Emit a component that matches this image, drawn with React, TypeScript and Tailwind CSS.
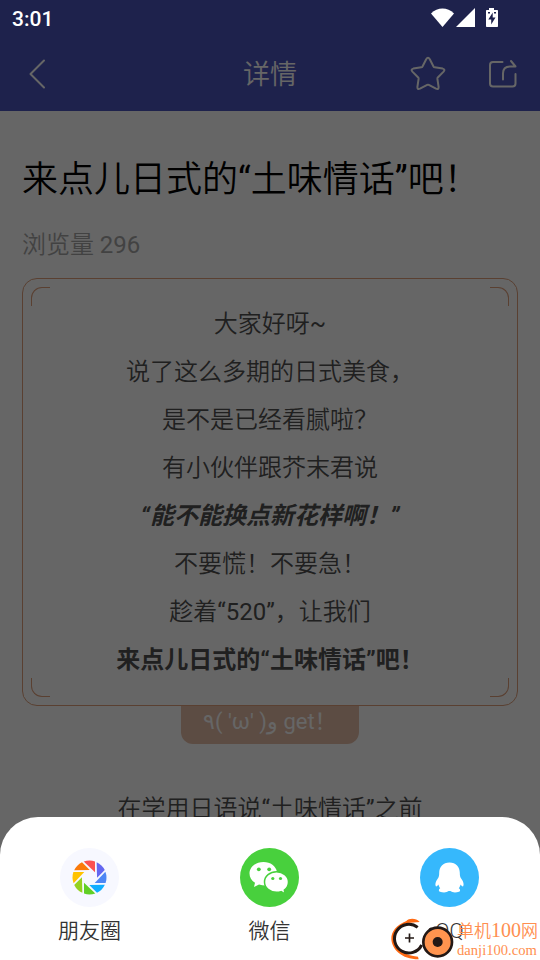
import type { ReactNode } from "react";

const lines = [
  { text: "大家好呀~" },
  { text: "说了这么多期的日式美食，" },
  { text: "是不是已经看腻啦？" },
  { text: "有小伙伴跟芥末君说" },
  { text: "“能不能换点新花样啊！”", className: "font-bold italic" },
  { text: "不要慌！不要急！" },
  { text: "趁着“520”，让我们" },
  { text: "来点儿日式的“土味情话”吧！", className: "font-bold" },
];

// Chinese runs are set in the demi-light cut, Latin runs and quotes stay regular
function Mixed({ text }: { text: string }) {
  return text.split(/([“”~0-9]+)/).map((part, i) =>
    i % 2 ? (
      <span key={i} className="font-normal">
        {part}
      </span>
    ) : (
      part
    ),
  );
}

function StatusBar() {
  return (
    <div className="absolute inset-x-0 top-0 z-20 flex h-9 items-center justify-between pl-3 pr-[41px] text-white">
      <span className="pt-px text-[21px] font-medium leading-9">3:01</span>
      <svg width="68" height="20" viewBox="0 0 68 20" fill="currentColor">
        <path d="M0 5.5C6.5-1.2 16.5-1.2 23 5.5L11.5 19z" />
        <path d="M44 0v19H25z" />
        <path d="M58 0h5v2h3.200q.8 0 .8.8v15.400q0 .8-.8.8H55.800q-.8 0-.8-.8V2.800q0-.8.8-.8H58z" />
        <path d="M61.700 4.500v5h2.800l-4.300 7v-5h-2.900zM57 4h2v1.500h-2zM63 4h2v1.500h-2z" fill="#1e224c" />
      </svg>
    </div>
  );
}

function Header() {
  return (
    <header className="grid h-[111px] grid-cols-3 items-center bg-[#4b55be] px-[22px] pt-9 text-white">
      <svg width="30" height="30" viewBox="0 0 30 30" fill="none" stroke="currentColor" strokeWidth="2" strokeLinecap="round" strokeLinejoin="round">
        <path d="M22 1.500 8.500 15 22 28.500" />
      </svg>
      <h1 className="pt-1 text-center text-[27px]">详情</h1>
      <div className="flex items-center justify-end gap-[42px]">
        <svg width="36" height="36" viewBox="0 0 36 36" fill="none" stroke="currentColor" strokeWidth="2" strokeLinejoin="round">
          <path d="M16.200 3.200q1.800-2.900 3.600 0l3.700 7.300q.4.700 1.200.8l8 1.300q2.900.7.900 3l-5.800 5.900q-.5.600-.4 1.400l1.200 8q.2 3-2.600 1.800l-7.200-3.800q-.8-.4-1.600 0l-7.200 3.800q-2.800 1.200-2.600-1.800l1.200-8q.1-.8-.4-1.400l-5.800-5.900q-2-2.300.9-3l8-1.300q.8-.1 1.200-.8z" />
        </svg>
        <svg width="30" height="30" viewBox="0 0 30 30" fill="none" stroke="currentColor" strokeWidth="2" strokeLinecap="round" strokeLinejoin="round">
          <path d="M14.500 3H5Q2 3 2 6v18.500q0 3 3 3h19.500q3 0 3-3V15" />
          <path d="M15 20.500v-6q0-7 7-7h5.500L23 2" />
        </svg>
      </div>
    </header>
  );
}

function QuoteCard() {
  return (
    <section className="relative h-[428px] rounded-[15px] border border-[#e0a07c] pt-[21px] text-center text-2xl leading-[48px] text-[#505050]">
      <i className="absolute left-2 top-2 size-[19px] rounded-tl-[11px] border-l border-t border-[#e0a07c]" />
      <i className="absolute right-2 top-2 size-[19px] rounded-tr-[11px] border-r border-t border-[#e0a07c]" />
      <i className="absolute bottom-2 left-2 size-[19px] rounded-bl-[11px] border-b border-l border-[#e0a07c]" />
      <i className="absolute bottom-2 right-2 size-[19px] rounded-br-[11px] border-b border-r border-[#e0a07c]" />
      {lines.map((line) => (
        <p key={line.text} className={line.className}>
          {line.className ? line.text : <Mixed text={line.text} />}
        </p>
      ))}
    </section>
  );
}

function ShareItem({ label, children }: { label: string; children: ReactNode }) {
  return (
    <button type="button" className="flex flex-1 flex-col items-center gap-2 pr-px text-[21px] leading-[33px] text-[#333]">
      {children}
      <span>{label}</span>
    </button>
  );
}

const blades = ["#fa5151", "#6467f0", "#4d86f5", "#10aeff", "#61cf25", "#95d11f", "#ffc300", "#fa7a0a"];

function MomentsIcon() {
  return (
    <svg width="59" height="59" viewBox="-29.5 -29.5 59 59">
      <circle r="29.500" fill="#f7f8ff" />
      {blades.map((color, i) => (
        <path
          key={color}
          d="M-5.800-15.900A17 17 0 0 1 5.500-16.100V-5.200z"
          fill={color}
          transform={`rotate(${i * 45})`}
        />
      ))}
    </svg>
  );
}

function WechatIcon() {
  return (
    <svg width="59" height="59" viewBox="0.5 0.5 59 59">
      <circle cx="30" cy="30" r="29.500" fill="#48d03d" />
      <path d="M24 14.500c-8 0-14 5-14 11.500 0 4 2 7 5.500 9.200L14.500 39.500l5-2.500q6 1.600 11 .3l7-12.800C36.500 18.500 31 14.500 24 14.500z" fill="#fff" />
      <path d="M37 24.200c-6.500 0-12 4.500-12 10.300s5.500 10.300 12 10.300q2.500 0 4.600-.7l4 2.200-.8-3.700c2.800-2 4.200-4.700 4.200-8.100 0-5.800-5.500-10.300-12-10.300z" fill="#fff" stroke="#48d03d" strokeWidth="1.500" />
      <g fill="#48d03d">
        <circle cx="19.300" cy="21.800" r="1.900" />
        <circle cx="29.700" cy="21.800" r="1.900" />
        <circle cx="33.300" cy="31" r="1.600" />
        <circle cx="41" cy="31" r="1.600" />
      </g>
    </svg>
  );
}

function QQIcon() {
  return (
    <svg width="59" height="59" viewBox="0.5 0.5 59 59">
      <circle cx="30" cy="30" r="29.500" fill="#36b8fc" />
      <path d="M30 15c-6.500 0-10.300 4.600-10.300 10.300 0 3-.3 4.500-1.700 6.200-2 2.700-2.600 5.700-1.700 7.300.7.600 1.800-.6 2.600-1.700.4 1.600 1 2.700 1.800 3.600-1.700.8-1.800 3-.2 3.600 3 .9 6.800.9 8.600-.7h1.800c1.800 1.600 5.600 1.600 8.600.7 1.600-.6 1.500-2.800-.2-3.600.8-.9 1.400-2 1.800-3.600.8 1.100 1.900 2.300 2.600 1.700.9-1.600.3-4.600-1.700-7.300-1.400-1.700-1.700-3.200-1.700-6.200C40.300 19.600 36.500 15 30 15z" fill="#fff" />
    </svg>
  );
}

function Watermark() {
  return (
    <div className="absolute bottom-0 right-0 flex h-12 text-[#ff8f50]">
      <svg width="70" height="48" viewBox="0 0 210 144" fill="none">
        <path d="M98 30C88 18 66 18 58 27C28 40 12 58 13 82c2 30 30 60 82 60l-2-8C55 130 24 112 23 80c-1-20 12-40 38-47z" fill="#ff6a13" />
        <path d="M92 46A43 43 0 1 0 104 99" stroke="#231815" strokeWidth="9" />
        <path d="M54 78h27M67.500 64.500v27" stroke="#231815" strokeWidth="5" />
        <path d="m129 48 12 20" stroke="#231815" strokeWidth="8" />
        <circle cx="152" cy="90" r="43" fill="#ff944f" stroke="#231815" strokeWidth="8" />
        <circle cx="152" cy="90" r="15" fill="#231815" />
      </svg>
      <div className="w-[83px] whitespace-nowrap pt-2 font-['Liberation_Serif','Noto_Sans_CJK_SC',serif]">
        <div className="text-[17px] leading-[21px]">
          单机<span className="text-xl leading-[21px]">100</span>网
        </div>
        <div className="text-[14.600px] leading-[16px]">danji100.com</div>
      </div>
    </div>
  );
}

function App() {
  return (
    <div className="relative h-[960px] w-[540px] overflow-hidden bg-white font-[Roboto,'Noto_Sans_CJK_SC',sans-serif] font-[350]">
      <StatusBar />
      <Header />
      <main className="px-[22px] pt-[44px]">
        <h2 className="text-4xl leading-[50px] text-black">
          <Mixed text="来点儿日式的“土味情话”吧！" />
        </h2>
        <p className="mt-[22px] text-2xl leading-9 text-[#a6a6a6]">
          <Mixed text="浏览量 296" />
        </p>
        <div className="mt-[15px]">
          <QuoteCard />
        </div>
        <div className="mx-auto h-[38px] w-[178px] rounded-b-xl bg-[#e6bda7] pl-[22px] text-[22px] font-normal leading-8 text-white">
          ٩( 'ω' )و get！
        </div>
        <p className="mt-[41px] text-center text-2xl leading-[48px] text-[#505050]">
          <Mixed text="在学用日语说“土味情话”之前" />
        </p>
      </main>

      <div className="absolute inset-0 z-10 bg-black/60" />
      <div className="absolute inset-x-0 bottom-0 z-20 flex h-[143px] rounded-t-[38px] bg-white pt-[31px]">
        <ShareItem label="朋友圈">
          <MomentsIcon />
        </ShareItem>
        <ShareItem label="微信">
          <WechatIcon />
        </ShareItem>
        <ShareItem label="QQ">
          <QQIcon />
        </ShareItem>
        <Watermark />
      </div>
    </div>
  );
}

export default App;
